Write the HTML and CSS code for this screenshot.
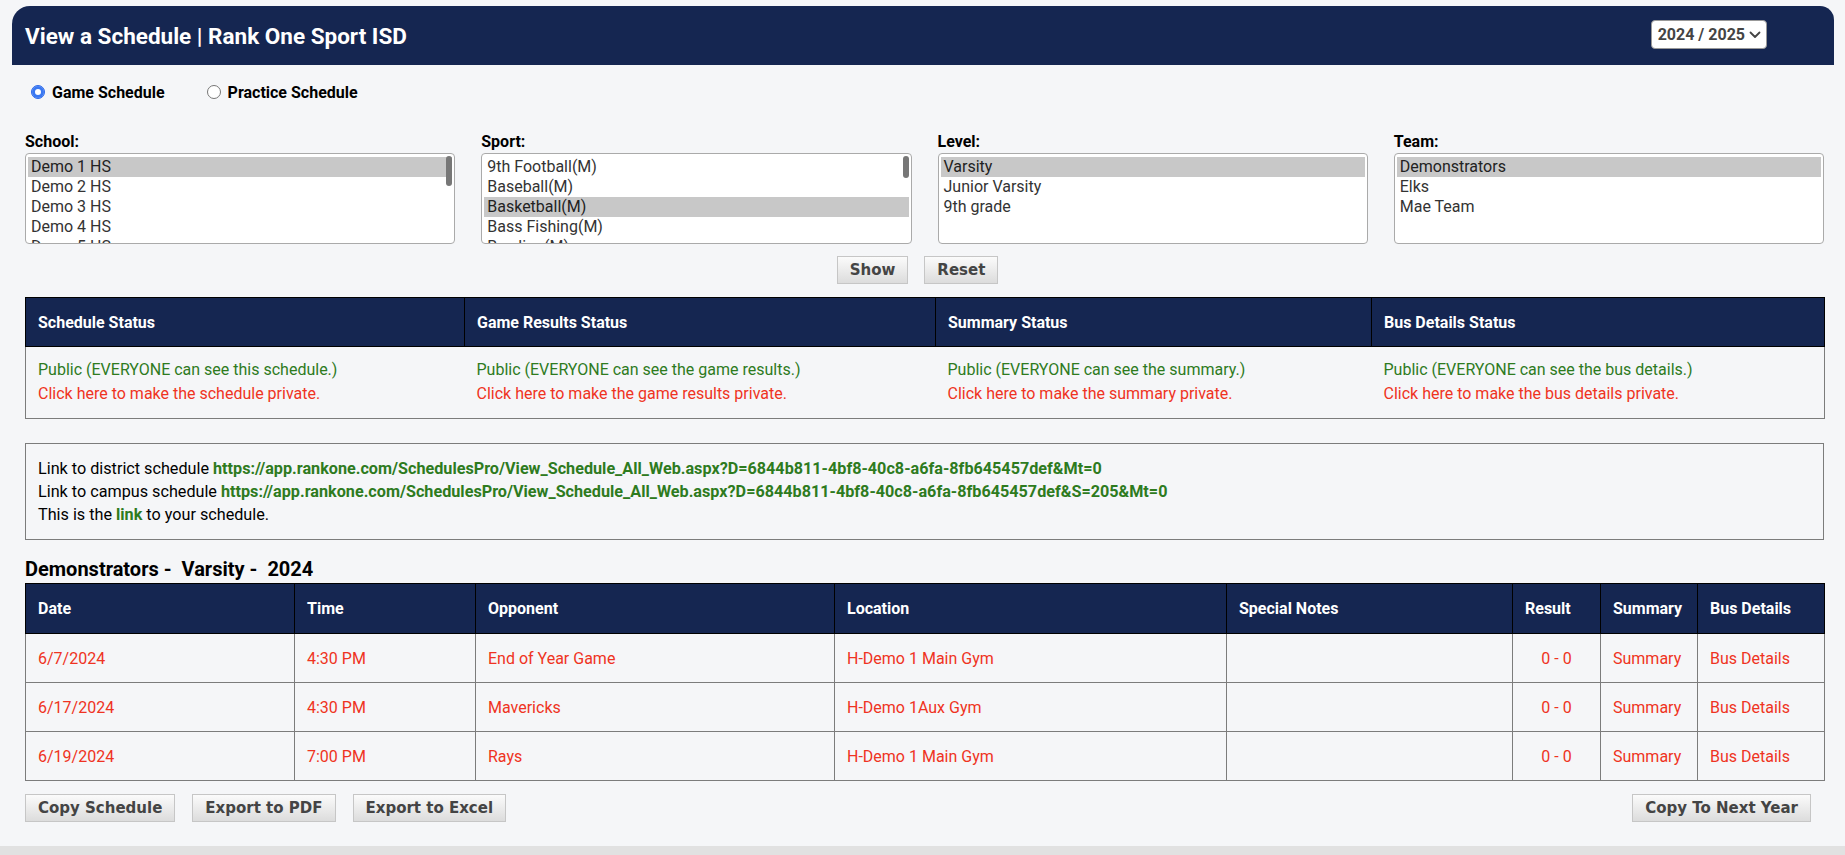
FILE: index.html
```html
<!DOCTYPE html>
<html lang="en">

<head>
  <meta charset="UTF-8">
  <title>View a Schedule | Rank One Sport ISD</title>

  <link rel="stylesheet" href="styles.css">

</head>

<body>
  <!-- TOP BAR: PAGE TITLE AND SCHOOL YEAR -->
  <div id="topbar">
    <h1>View a Schedule | Rank One Sport ISD</h1>
    <div class="yearpick">
      <span>2024 / 2025</span>
      <svg width="12" height="8" viewBox="0 0 12 8"><path d="M1.5 1.5 L6 6 L10.5 1.5" fill="none" stroke="#444" stroke-width="1.8" stroke-linecap="round" stroke-linejoin="round"/></svg>
    </div>
  </div>

  <div id="main">
    <!-- SCHEDULE TYPE -->
    <div class="kind">
      <label class="radio"><input type="radio" name="kind" checked> Game Schedule</label>
      <label class="radio"><input type="radio" name="kind"> Practice Schedule</label>
    </div>

    <!-- FILTER LISTS -->
    <div class="filters">
      <div class="filter">
        <div class="flabel">School:</div>
        <div class="listbox">
          <div class="opt sel">Demo 1 HS</div>
          <div class="opt">Demo 2 HS</div>
          <div class="opt">Demo 3 HS</div>
          <div class="opt">Demo 4 HS</div>
          <div class="opt">Demo 5 HS</div>
          <span class="thumb"></span>
        </div>
      </div>
      <div class="filter">
        <div class="flabel">Sport:</div>
        <div class="listbox">
          <div class="opt">9th Football(M)</div>
          <div class="opt">Baseball(M)</div>
          <div class="opt sel">Basketball(M)</div>
          <div class="opt">Bass Fishing(M)</div>
          <div class="opt">Bowling(M)</div>
          <span class="thumb short"></span>
        </div>
      </div>
      <div class="filter">
        <div class="flabel">Level:</div>
        <div class="listbox">
          <div class="opt sel">Varsity</div>
          <div class="opt">Junior Varsity</div>
          <div class="opt">9th grade</div>
        </div>
      </div>
      <div class="filter">
        <div class="flabel">Team:</div>
        <div class="listbox">
          <div class="opt sel">Demonstrators</div>
          <div class="opt">Elks</div>
          <div class="opt">Mae Team</div>
        </div>
      </div>
    </div>

    <div class="actions">
      <button class="btn">Show</button>
      <button class="btn">Reset</button>
    </div>

    <!-- VISIBILITY OF THE SCHEDULE -->
    <table class="status">
      <colgroup>
        <col class="c1"><col class="c2"><col class="c3"><col class="c4">
      </colgroup>
      <tr>
        <th>Schedule Status</th>
        <th>Game Results Status</th>
        <th>Summary Status</th>
        <th>Bus Details Status</th>
      </tr>
      <tr>
        <td><span class="pub">Public (EVERYONE can see this schedule.)</span><br><a class="red" href="#">Click here to make the schedule private.</a></td>
        <td><span class="pub">Public (EVERYONE can see the game results.)</span><br><a class="red" href="#">Click here to make the game results private.</a></td>
        <td><span class="pub">Public (EVERYONE can see the summary.)</span><br><a class="red" href="#">Click here to make the summary private.</a></td>
        <td><span class="pub">Public (EVERYONE can see the bus details.)</span><br><a class="red" href="#">Click here to make the bus details private.</a></td>
      </tr>
    </table>

    <div class="links">
      Link to district schedule <a href="#">https://app.rankone.com/SchedulesPro/View_Schedule_All_Web.aspx?D=6844b811-4bf8-40c8-a6fa-8fb645457def&amp;Mt=0</a><br>
      Link to campus schedule <a href="#">https://app.rankone.com/SchedulesPro/View_Schedule_All_Web.aspx?D=6844b811-4bf8-40c8-a6fa-8fb645457def&amp;S=205&amp;Mt=0</a><br>
      This is the <a href="#">link</a> to your schedule.
    </div>

    <!-- GAMES -->
    <h2>Demonstrators -&nbsp; Varsity -&nbsp; 2024</h2>
    <table class="sched">
      <colgroup>
        <col class="s-date"><col class="s-time"><col class="s-opp"><col class="s-loc">
        <col class="s-notes"><col class="s-res"><col class="s-sum"><col class="s-bus">
      </colgroup>
      <tr>
        <th>Date</th>
        <th>Time</th>
        <th>Opponent</th>
        <th>Location</th>
        <th>Special Notes</th>
        <th>Result</th>
        <th>Summary</th>
        <th>Bus Details</th>
      </tr>
      <tr>
        <td>6/7/2024</td>
        <td>4:30 PM</td>
        <td>End of Year Game</td>
        <td>H-Demo 1 Main Gym</td>
        <td></td>
        <td class="res">0 - 0</td>
        <td><a href="#">Summary</a></td>
        <td><a href="#">Bus Details</a></td>
      </tr>
      <tr>
        <td>6/17/2024</td>
        <td>4:30 PM</td>
        <td>Mavericks</td>
        <td>H-Demo 1Aux Gym</td>
        <td></td>
        <td class="res">0 - 0</td>
        <td><a href="#">Summary</a></td>
        <td><a href="#">Bus Details</a></td>
      </tr>
      <tr>
        <td>6/19/2024</td>
        <td>7:00 PM</td>
        <td>Rays</td>
        <td>H-Demo 1 Main Gym</td>
        <td></td>
        <td class="res">0 - 0</td>
        <td><a href="#">Summary</a></td>
        <td><a href="#">Bus Details</a></td>
      </tr>
    </table>

    <div class="bottom">
      <div class="group">
        <button class="btn">Copy Schedule</button>
        <button class="btn">Export to PDF</button>
        <button class="btn">Export to Excel</button>
      </div>
      <button class="btn">Copy To Next Year</button>
    </div>
  </div>

  <div id="footer"></div>
</body>

</html>
```

FILE: styles.css
```css
/* PAGE */
body {
  margin: 0;
  padding-top: 6px;
  background-color: #f5f6f8;
  font-family: Roboto, "Liberation Sans", sans-serif;
  color: #000;
}

a {
  text-decoration: none;
}

/* TOP BAR */
#topbar {
  margin: 0 11px 0 12px;
  height: 59px;
  padding: 0 67px 0 13px;
  background-color: #152651;
  border-radius: 18px 14px 0 0;
  display: flex;
  align-items: center;
  justify-content: space-between;
}

#topbar h1 {
  margin: 0;
  color: #fff;
  font-size: 22.5px;
  font-weight: bold;
}

.yearpick {
  height: 27px;
  padding: 0 5px 0 6px;
  background-color: #fff;
  border: 1px solid #999;
  border-radius: 4px;
  display: flex;
  align-items: center;
  gap: 4px;
  color: #444;
  font-size: 16px;
  font-weight: bold;
  margin-top: -2px;
}

/* CONTENT */
#main {
  padding: 0 21px 0 25px;
}

.kind {
  margin-top: 16px;
  height: 22px;
  padding-left: 6px;
  display: flex;
  align-items: center;
  gap: 42px;
}

.radio {
  display: flex;
  align-items: center;
  gap: 7px;
  font-size: 16px;
  font-weight: bold;
}

/* round radio, blue with a white dot when picked */
.radio input {
  appearance: none;
  margin: 0;
  width: 14px;
  height: 14px;
  border: 1px solid #767676;
  border-radius: 50%;
  background-color: #fff;
}

.radio input:checked {
  border-color: #2f6bea;
  background-color: #3a78f2;
  box-shadow: inset 0 0 0 3px #3a78f2, inset 0 0 0 7px #fff;
}

.filters {
  margin-top: 30px;
  display: grid;
  grid-template-columns: repeat(4, 1fr);
  gap: 26px;
}

.flabel {
  font-size: 16px;
  font-weight: bold;
  line-height: 18px;
  margin-bottom: 2px;
}

.listbox {
  position: relative;
  height: 85px;
  padding: 3px 2px 1px;
  overflow: hidden;
  background-color: #fff;
  border: 1px solid #aaa;
  border-radius: 4px;
}

.opt {
  padding: 0 3px;
  line-height: 20px;
  font-size: 16px;
  color: #333;
  white-space: nowrap;
}

.opt.sel {
  background-color: #c8c8c8;
  color: #222;
}

/* scrollbar thumb drawn over the list */
.thumb {
  position: absolute;
  top: 2px;
  right: 2px;
  width: 6px;
  height: 30px;
  border-radius: 3px;
  background-color: #777;
}

.thumb.short {
  height: 22px;
}

/* BUTTONS */
.btn {
  height: 28px;
  padding: 0 12px;
  font-family: "DejaVu Sans", Verdana, sans-serif;
  font-size: 15px;
  font-weight: bold;
  color: #444;
  background: linear-gradient(#fbfbfb, #dcdcdc);
  border: 1px solid #c6c6c6;
  border-radius: 0;
}

.actions {
  margin-top: 12px;
  display: flex;
  justify-content: center;
  gap: 16px;
  padding-right: 14px;
}

/* TABLES */
table {
  width: 100%;
  border-collapse: collapse;
  table-layout: fixed;
}

th {
  background-color: #152651;
  color: #fff;
  font-size: 16px;
  font-weight: bold;
  text-align: left;
  padding: 0 12px;
  border: 1px solid #000;
}

.status {
  margin-top: 13px;
  border: 1px solid #7c7c7c;
}

.status th {
  height: 48px;
}

.status td {
  padding: 11px 12px 13px;
  font-size: 16px;
  line-height: 23.5px;
  vertical-align: top;
}

.c1 { width: 439px; }
.c2 { width: 471px; }
.c3 { width: 436px; }
.c4 { width: 453px; }

.pub {
  color: #2e7b1e;
}

.red {
  color: #ef3322;
}

/* LINKS BOX */
.links {
  margin-top: 24px;
  padding: 13px 12px;
  border: 1px solid #7c7c7c;
  font-size: 16.2px;
  line-height: 23px;
}

.links a {
  color: #2e7b1e;
  font-weight: bold;
}

h2 {
  margin: 18px 0 2px;
  font-size: 20px;
  line-height: 23px;
}

/* SCHEDULE TABLE */
.sched {
  border: 1px solid #7c7c7c;
}

.sched th {
  height: 49px;
}

.sched td {
  height: 48px;
  padding: 0 12px;
  font-size: 16px;
  color: #ef3322;
  border: 1px solid #7c7c7c;
}

.sched td a {
  color: #ef3322;
}

.sched td.res {
  text-align: center;
}

.s-date { width: 269px; }
.s-time { width: 181px; }
.s-opp { width: 359px; }
.s-loc { width: 392px; }
.s-notes { width: 286px; }
.s-res { width: 88px; }
.s-sum { width: 97px; }
.s-bus { width: 127px; }

.bottom {
  margin-top: 13px;
  display: flex;
  justify-content: space-between;
  padding-right: 13px;
}

.bottom .group {
  display: flex;
  gap: 17px;
}

#footer {
  margin-top: 24px;
  height: 20px;
  background-color: #e1e1e1;
}
```
